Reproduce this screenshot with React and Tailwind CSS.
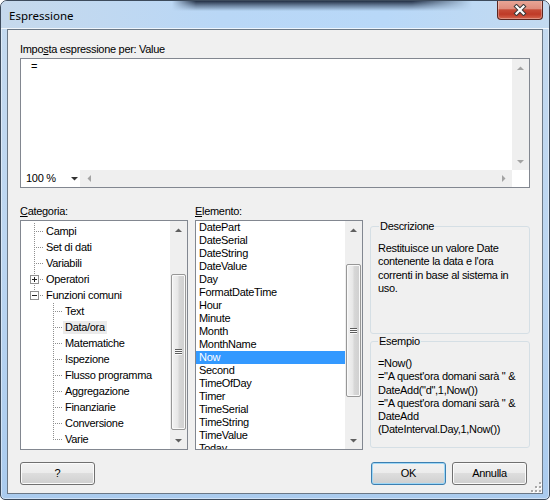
import React from 'react';

function Arrow({ dir, color }) {
  const paths = {
    up: 'M0 4L3.5 0.5L7 4Z',
    down: 'M0 0L3.5 3.5L7 0Z',
    left: 'M4 0L0.5 3.5L4 7Z',
    right: 'M0 0L3.5 3.5L0 7Z',
  };
  const vert = dir === 'up' || dir === 'down';
  return (
    <svg width={vert ? 7 : 4} height={vert ? 4 : 7} viewBox={vert ? '0 0 7 4' : '0 0 4 7'}>
      <path d={paths[dir]} fill={color} />
    </svg>
  );
}

function Grip() {
  return (
    <svg width="7" height="6" viewBox="0 0 7 6" shapeRendering="crispEdges">
      <rect x="0" y="0" width="7" height="1" fill="#5c5c5c" />
      <rect x="0" y="1" width="7" height="1" fill="#fbfbfb" />
      <rect x="0" y="2" width="7" height="1" fill="#5c5c5c" />
      <rect x="0" y="3" width="7" height="1" fill="#fbfbfb" />
      <rect x="0" y="4" width="7" height="1" fill="#5c5c5c" />
      <rect x="0" y="5" width="7" height="1" fill="#fbfbfb" />
    </svg>
  );
}

function VScroll({ spacer, thumb, disabled }) {
  const c = disabled ? '#a3a3a3' : '#5f5f5f';
  return (
    <div className="w-[17px] shrink-0 flex flex-col bg-[#efefef]">
      <div className="h-[17px] shrink-0 flex items-center justify-center">
        <Arrow dir="up" color={c} />
      </div>
      <div className="flex-1 min-h-0 flex flex-col">
        {thumb ? (
          <>
            <div className={`${spacer} shrink-0`} />
            <div
              className={`${thumb} shrink-0 mx-px rounded-[2px] border border-[#979797] bg-[linear-gradient(to_right,#f3f3f3,#e7e7e7_45%,#d7d7d7_55%,#cfcfcf)] shadow-[inset_0_0_0_1px_#f9f9f9] flex items-center justify-center`}
            >
              <Grip />
            </div>
          </>
        ) : null}
      </div>
      <div className="h-[17px] shrink-0 flex items-center justify-center">
        <Arrow dir="down" color={c} />
      </div>
    </div>
  );
}

function TreeCell({ type, box }) {
  const line = '#8f8f8f';
  return (
    <svg width="19" height="16" viewBox="0 0 19 16" className="shrink-0" shapeRendering="crispEdges">
      {type !== 'none' && (
        <line x1="9.5" y1="0" x2="9.5" y2={type === 'end' ? 9 : 16} stroke={line} strokeDasharray="1 1" />
      )}
      {type !== 'none' && (
        <line x1="11" y1="8.5" x2="19" y2="8.5" stroke={line} strokeDasharray="1 1" />
      )}
      {box && (
        <>
          <rect x="5.5" y="4.5" width="8" height="8" fill="#ffffff" stroke="#919191" />
          <line x1="7" y1="8.5" x2="12" y2="8.5" stroke="#222222" />
          {box === 'plus' && <line x1="9.5" y1="6" x2="9.5" y2="11" stroke="#222222" />}
        </>
      )}
    </svg>
  );
}

const tree = [
  { label: 'Campi', cells: ['tee'] },
  { label: 'Set di dati', cells: ['tee'] },
  { label: 'Variabili', cells: ['tee'] },
  { label: 'Operatori', cells: ['tee'], box: 'plus' },
  { label: 'Funzioni comuni', cells: ['end'], box: 'minus' },
  { label: 'Text', cells: ['none', 'tee'] },
  { label: 'Data/ora', cells: ['none', 'tee'], selected: true },
  { label: 'Matematiche', cells: ['none', 'tee'] },
  { label: 'Ispezione', cells: ['none', 'tee'] },
  { label: 'Flusso programma', cells: ['none', 'tee'] },
  { label: 'Aggregazione', cells: ['none', 'tee'] },
  { label: 'Finanziarie', cells: ['none', 'tee'] },
  { label: 'Conversione', cells: ['none', 'tee'] },
  { label: 'Varie', cells: ['none', 'end'] },
];

const items = [
  'DatePart', 'DateSerial', 'DateString', 'DateValue', 'Day', 'FormatDateTime', 'Hour', 'Minute',
  'Month', 'MonthName', 'Now', 'Second', 'TimeOfDay', 'Timer', 'TimeSerial', 'TimeString', 'TimeValue', 'Today',
];

function Button({ children, primary }) {
  return (
    <div
      className={`w-[75px] h-[23px] rounded-[3px] border flex items-center justify-center bg-[linear-gradient(to_bottom,#f2f2f2_0%,#ebebeb_50%,#dddddd_50%,#cfcfcf_100%)] ${
        primary
          ? 'border-[#3c7fb1] shadow-[inset_0_0_0_1px_#9ed7f6]'
          : 'border-[#707070] shadow-[inset_0_0_0_1px_#fbfbfb]'
      }`}
    >
      {children}
    </div>
  );
}

export default function App() {
  return (
    <div className="w-[550px] h-[500px] border border-[#3d4b5c] rounded-t-[7px] rounded-b-[5px] overflow-hidden flex flex-col bg-[linear-gradient(to_bottom,#c5daef,#bcd6f1_50%,#aacbee)] shadow-[inset_0_0_0_1px_rgba(255,255,255,0.45)]">
      {/* title bar */}
      <div className="relative h-[28px] shrink-0 flex items-start bg-[linear-gradient(to_right,#c6d9ec,#b9d7f6_40%,#b8d8f8_70%,#c3daf0)] shadow-[inset_0_-1px_0_rgba(255,255,255,0.75)]">
        <div className="absolute left-[171px] top-0 w-[300px] h-[10px] bg-[linear-gradient(to_bottom,rgba(28,40,60,0.95),rgba(40,55,80,0.5)_50%,rgba(40,55,80,0))] [mask-image:linear-gradient(to_right,transparent,black_8%,black_80%,transparent)]" />
        <span className="relative mt-[7px] ml-[8px] text-[11.5px] leading-[15px] font-['Noto_Sans',sans-serif] text-black">
          Espressione
        </span>
        <div className="relative ml-auto mr-[6px] -mt-px w-[46px] h-[20px] border border-t-0 border-[#5b2620] rounded-b-[4px] bg-[linear-gradient(to_bottom,#e9a899_0%,#df8d7d_45%,#c64b37_52%,#bf3a27_75%,#d5664f_100%)] shadow-[inset_0_0_0_1px_rgba(255,255,255,0.3)] flex items-center justify-center">
          <svg width="14" height="12" viewBox="0 0 14 12">
            <path d="M3.5 2.5L10.5 9.5M10.5 2.5L3.5 9.5" stroke="#3a3a3a" strokeWidth="4.2" strokeLinecap="square" />
            <path d="M3.5 2.5L10.5 9.5M10.5 2.5L3.5 9.5" stroke="#ffffff" strokeWidth="2.2" strokeLinecap="square" />
          </svg>
        </div>
      </div>

      {/* client row */}
      <div className="flex px-[6px]">
        <div className="relative w-[536px] h-[465px] border border-[#6b7886] bg-[#f0f0f0] pl-[12px] pr-[12px] pt-[13px] flex flex-col text-black text-[11px] tracking-[-0.3px] font-['Liberation_Sans',Arial,sans-serif]">
          <div className="h-[13px] leading-[13px] whitespace-nowrap">
            Impo<span className="underline underline-offset-[1px]">s</span>ta espressione per: Value
          </div>

          {/* expression editor */}
          <div className="mt-[2px] h-[130px] shrink-0 border border-[#828790] bg-white flex flex-col">
            <div className="flex flex-1 min-h-0">
              <div className="flex-1 pl-[10px] pt-px leading-[13px]">=</div>
              <VScroll disabled />
            </div>
            <div className="h-[17px] shrink-0 flex">
              <div className="w-[59px] bg-white flex items-center justify-between pl-[5px] pr-[2px]">
                <span className="leading-[13px]">100 %</span>
                <Arrow dir="down" color="#333333" />
              </div>
              <div className="flex-1 flex bg-[#efefef]">
                <div className="w-[17px] flex items-center justify-center">
                  <Arrow dir="left" color="#a3a3a3" />
                </div>
                <div className="flex-1" />
                <div className="w-[17px] flex items-center justify-center">
                  <Arrow dir="right" color="#a3a3a3" />
                </div>
              </div>
              <div className="w-[17px] bg-white" />
            </div>
          </div>

          {/* lower section */}
          <div className="mt-[17px] flex items-start gap-[7px]">
            {/* Categoria */}
            <div className="w-[168px] flex flex-col">
              <div className="h-[13px] leading-[13px]">
                <span className="underline underline-offset-[1px]">C</span>ategoria:
              </div>
              <div className="mt-[2px] h-[230px] border border-[#828790] bg-white flex">
                <div className="flex-1 min-w-0 pt-[2px] overflow-hidden">
                  {tree.map((r) => (
                    <div key={r.label} className="h-[16px] flex items-center pl-[4px]">
                      {r.cells.map((c, i) => (
                        <TreeCell key={i} type={c} box={i === r.cells.length - 1 ? r.box : undefined} />
                      ))}
                      <span
                        className={`h-[13px] leading-[13px] px-[2px] whitespace-nowrap ${
                          r.selected ? 'bg-[#ebebeb]' : ''
                        }`}
                      >
                        {r.label}
                      </span>
                    </div>
                  ))}
                </div>
                <VScroll spacer="h-[36px]" thumb="h-[156px]" />
              </div>
            </div>

            {/* Elemento */}
            <div className="w-[168px] flex flex-col">
              <div className="h-[13px] leading-[13px]">
                <span className="underline underline-offset-[1px]">E</span>lemento:
              </div>
              <div className="mt-[2px] h-[230px] border border-[#828790] bg-white flex">
                <div className="flex-1 min-w-0 overflow-hidden">
                  {items.map((it) => (
                    <div
                      key={it}
                      className={`h-[13px] leading-[13px] pl-[3px] whitespace-nowrap ${
                        it === 'Now' ? 'bg-[#3399ff] text-white' : ''
                      }`}
                    >
                      {it}
                    </div>
                  ))}
                </div>
                <VScroll spacer="h-[26px]" thumb="h-[133px]" />
              </div>
            </div>

            {/* groups */}
            <div className="w-[160px] pt-[15px] flex flex-col">
              <fieldset className="h-[114px] m-0 p-0 border border-[#d5dfe5] rounded-[3px]">
                <legend className="ml-[8px] px-px leading-[13px]">Descrizione</legend>
                <div className="pl-[7px] pt-[9px] leading-[13.3px] whitespace-nowrap">
                  <div>Restituisce un valore Date</div>
                  <div>contenente la data e l'ora</div>
                  <div>correnti in base al sistema in</div>
                  <div>uso.</div>
                </div>
              </fieldset>
              <fieldset className="mt-px h-[113px] m-0 p-0 border border-[#d5dfe5] rounded-[3px]">
                <legend className="ml-[7px] px-px leading-[13px]">Esempio</legend>
                <div className="pl-[7px] pt-[9px] leading-[13.3px] whitespace-nowrap">
                  <div>=Now()</div>
                  <div>{'="A quest\'ora domani sarà " &'}</div>
                  <div>{'DateAdd("d",1,Now())'}</div>
                  <div>{'="A quest\'ora domani sarà " &'}</div>
                  <div>DateAdd</div>
                  <div>(DateInterval.Day,1,Now())</div>
                </div>
              </fieldset>
            </div>
          </div>

          {/* buttons */}
          <div className="mt-[12px] flex items-center justify-between pr-[3px]">
            <Button>?</Button>
            <div className="flex gap-[6px]">
              <Button primary>OK</Button>
              <Button>Annulla</Button>
            </div>
          </div>

          {/* size grip */}
          <svg className="absolute right-0 bottom-0" width="11" height="11" viewBox="0 0 11 11" shapeRendering="crispEdges">
            {[
              [8, 0], [8, 4], [4, 4], [8, 8], [4, 8], [0, 8],
            ].map(([x, y], i) => (
              <g key={i}>
                <rect x={x + 1} y={y + 1} width="2" height="2" fill="#ffffff" />
                <rect x={x} y={y} width="2" height="2" fill="#a8a8a8" />
              </g>
            ))}
          </svg>
        </div>
      </div>
    </div>
  );
}
